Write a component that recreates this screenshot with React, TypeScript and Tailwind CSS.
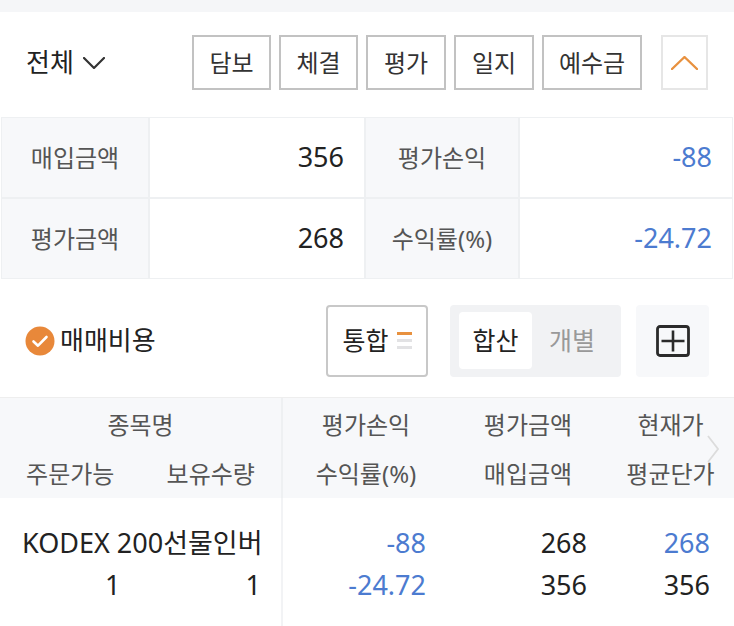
// Holdings summary panel: filter toolbar, totals grid, view options and position list
const FONT = { fontFamily: '"Noto Sans", "Noto Sans CJK KR", sans-serif' }

const tabs = [
  { label: "담보", w: "w-[79px]" },
  { label: "체결", w: "w-[79px]" },
  { label: "평가", w: "w-[80px]" },
  { label: "일지", w: "w-[80px]" },
  { label: "예수금", w: "w-[100px]" },
]

type Stat = { label: string; value: string; blue?: boolean }

const summary: Stat[][] = [
  [
    { label: "매입금액", value: "356" },
    { label: "평가손익", value: "-88", blue: true },
  ],
  [
    { label: "평가금액", value: "268" },
    { label: "수익률(%)", value: "-24.72", blue: true },
  ],
]

function CheckCircle() {
  return (
    <svg width="30" height="30" viewBox="0 0 30 30">
      <circle cx="15" cy="15" r="14.5" fill="#e8883a" />
      <path d="M8.5 15.5l4.5 4.2 8.5-8.7" fill="none" stroke="#fff" strokeWidth="2.6" strokeLinecap="round" strokeLinejoin="round" />
    </svg>
  )
}

function BoxPlus() {
  return (
    <svg width="34" height="32" viewBox="0 0 34 32">
      <rect x="1.5" y="1.5" width="31" height="29" rx="2.5" fill="none" stroke="#2b2b2b" strokeWidth="2.8" />
      <path d="M17 5.5v21M5.5 16h23" stroke="#2b2b2b" strokeWidth="2.6" />
    </svg>
  )
}

function Caret({ up, color, w, h, sw }: { up?: boolean; color: string; w: number; h: number; sw: number }) {
  const d = up ? `M1 ${h - 1}L${w / 2} 1L${w - 1} ${h - 1}` : `M1 1L${w / 2} ${h - 1}L${w - 1} 1`
  return (
    <svg width={w} height={h} viewBox={`0 0 ${w} ${h}`}>
      <path d={d} fill="none" stroke={color} strokeWidth={sw} strokeLinecap="round" strokeLinejoin="round" />
    </svg>
  )
}

export default function App() {
  return (
    <div className="w-[734px] h-[626px] overflow-hidden bg-white text-[#222]" style={FONT}>
      <div className="h-[12px] bg-[#f5f6f8]" />

      {/* toolbar */}
      <div className="h-[105px] flex items-start pt-[23px] pl-[26px] pr-[26px]">
        <button className="h-[55px] flex items-center gap-[9px] text-[26px] text-[#222]">
          <span>전체</span>
          <Caret color="#333" w={22} h={12} sw={2.2} />
        </button>
        <div className="ml-auto flex gap-[8px]">
          {tabs.map((t) => (
            <button
              key={t.label}
              className={`${t.w} h-[55px] border-2 border-[#c2c2c2] bg-white text-[24px] text-[#333] flex items-center justify-center`}
            >
              {t.label}
            </button>
          ))}
        </div>
        <button className="ml-[19px] w-[47px] h-[55px] border-2 border-[#e6e6e6] flex items-center justify-center">
          <Caret up color="#e8913f" w={27} h={14} sw={2.4} />
        </button>
      </div>

      {/* totals */}
      <div className="mx-[1px] p-[1px] bg-[#eef0f2] grid grid-cols-[146px_214px_152px_1fr] gap-[2px]">
        {summary.map((row) =>
          row.map((s) => [
            <div key={s.label} className="h-[79px] bg-[#f7f8fa] flex items-center justify-center text-[24px] text-[#555]">
              {s.label}
            </div>,
            <div
              key={s.label + "-v"}
              className={`h-[79px] bg-white flex items-center justify-end pr-[20px] text-[27px] ${
                s.blue ? "text-[#4c7bd0]" : "text-[#222]"
              }`}
            >
              {s.value}
            </div>,
          ])
        )}
      </div>

      {/* options */}
      <div className="h-[119px] flex items-center pt-[5px] pl-[25px] pr-[25px] border-b border-[#eeeeee]">
        <CheckCircle />
        <span className="ml-[5px] text-[26px] text-[#222]">매매비용</span>
        <button className="ml-auto w-[102px] h-[72px] border-2 border-[#c8c8c8] rounded-[4px] flex items-center justify-center gap-[8px]">
          <span className="text-[25px] text-[#222]">통합</span>
          <span className="flex flex-col gap-[4px]">
            <span className="block w-[15px] h-[3px] bg-[#e8913f]" />
            <span className="block w-[15px] h-[3px] bg-[#e2e2e4]" />
            <span className="block w-[15px] h-[3px] bg-[#e2e2e4]" />
          </span>
        </button>
        <div className="ml-[22px] w-[171px] h-[72px] bg-[#f1f2f4] rounded-[4px] p-[9px] flex items-center">
          <div className="w-[73px] h-[57px] bg-white rounded-[4px] flex items-center justify-center text-[25px] text-[#222]">
            합산
          </div>
          <div className="flex-1 flex items-center justify-center text-[25px] text-[#999]">개별</div>
        </div>
        <button className="ml-[15px] w-[73px] h-[72px] bg-[#f7f8fa] rounded-[4px] flex items-center justify-center">
          <BoxPlus />
        </button>
      </div>

      {/* position list */}
      <div className="relative">
        <div className="flex bg-[#f7f8fa] h-[100px] text-[24px] text-[#555]">
          <div className="w-[283px] pt-[2px] border-r-2 border-[#eef0f2]">
            <div className="h-[50px] flex items-center justify-center">종목명</div>
            <div className="h-[48px] flex">
              <div className="flex-1 flex items-center justify-center">주문가능</div>
              <div className="flex-1 flex items-center justify-center">보유수량</div>
            </div>
          </div>
          <div className="w-[166px] pt-[2px]">
            <div className="h-[50px] flex items-center justify-center">평가손익</div>
            <div className="h-[48px] flex items-center justify-center">수익률(%)</div>
          </div>
          <div className="w-[158px] pt-[2px]">
            <div className="h-[50px] flex items-center justify-center">평가금액</div>
            <div className="h-[48px] flex items-center justify-center">매입금액</div>
          </div>
          <div className="flex-1 pt-[2px]">
            <div className="h-[50px] flex items-center justify-center">현재가</div>
            <div className="h-[48px] flex items-center justify-center">평균단가</div>
          </div>
        </div>
        <div className="absolute right-[15px] top-[37px]">
          <svg width="12" height="28" viewBox="0 0 12 28">
            <path d="M1 1l10 13L1 27" fill="none" stroke="#dcdcdc" strokeWidth="1.8" />
          </svg>
        </div>

        <div className="flex h-[128px] text-[27px]">
          <div className="w-[283px] pt-[24px] border-r-2 border-[#f2f3f5]">
            <div className="h-[42px] flex items-center pl-[22px] text-[27px] text-[#222] whitespace-nowrap overflow-hidden">
              KODEX 200선물인버
            </div>
            <div className="h-[42px] flex text-[#222]">
              <div className="flex-1 flex items-center justify-end pr-[20px]">1</div>
              <div className="flex-1 flex items-center justify-end pr-[20px]">1</div>
            </div>
          </div>
          <div className="w-[166px] pt-[24px] pr-[23px] text-[#4c7bd0]">
            <div className="h-[42px] flex items-center justify-end">-88</div>
            <div className="h-[42px] flex items-center justify-end">-24.72</div>
          </div>
          <div className="w-[158px] pt-[24px] pr-[20px] text-[#222]">
            <div className="h-[42px] flex items-center justify-end">268</div>
            <div className="h-[42px] flex items-center justify-end">356</div>
          </div>
          <div className="flex-1 pt-[24px] pr-[24px]">
            <div className="h-[42px] flex items-center justify-end text-[#4c7bd0]">268</div>
            <div className="h-[42px] flex items-center justify-end text-[#222]">356</div>
          </div>
        </div>
      </div>
    </div>
  )
}
